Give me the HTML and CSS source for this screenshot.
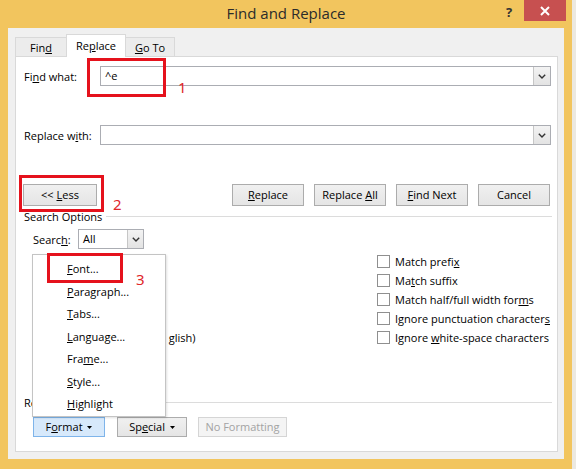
FILE: index.html
```html
<!DOCTYPE html>
<html>
<head>
<meta charset="utf-8">
<title>Find and Replace</title>
<link rel="stylesheet" href="styles.css">
</head>
<body>
<div class="screen">
  <div class="window">
    <div class="titlebar">
      <div class="tb-left"></div>
      <div class="title">Find and Replace</div>
      <div class="tb-right">
        <div class="help">?</div>
        <div class="close">
          <svg width="10" height="10" viewBox="0 0 10 10"><path d="M1 1L9 9M9 1L1 9" stroke="#fff" stroke-width="2" fill="none"/></svg>
        </div>
      </div>
    </div>
    <div class="dialog">
      <div class="tabs">
        <div class="tab tab-find">Fin<u>d</u></div>
        <div class="tab tab-replace active">Re<u>p</u>lace</div>
        <div class="tab tab-goto"><u>G</u>o To</div>
      </div>
      <div class="panel">
        <div class="field-row">
          <div class="field-label">Fi<u>n</u>d what:</div>
          <div class="combo wide">
            <span class="combo-value">^e</span>
            <span class="combo-drop"><svg width="8" height="5" viewBox="0 0 8 5"><path d="M0.8 0.8L4 4L7.2 0.8" stroke="#333" stroke-width="1.4" fill="none"/></svg></span>
          </div>
        </div>
        <div class="field-row replace-row">
          <div class="field-label">Replace w<u>i</u>th:</div>
          <div class="combo wide">
            <span class="combo-value"></span>
            <span class="combo-drop"><svg width="8" height="5" viewBox="0 0 8 5"><path d="M0.8 0.8L4 4L7.2 0.8" stroke="#333" stroke-width="1.4" fill="none"/></svg></span>
          </div>
        </div>
        <div class="button-row">
          <div class="btn btn-less">&lt;&lt; <u>L</u>ess</div>
          <div class="spacer"></div>
          <div class="btn"><u>R</u>eplace</div>
          <div class="btn">Replace <u>A</u>ll</div>
          <div class="btn"><u>F</u>ind Next</div>
          <div class="btn btn-cancel">Cancel</div>
        </div>
        <div class="group-head search-head"><span>Search Options</span><span class="rule"></span></div>
        <div class="search-row">
          <div class="search-label">Searc<u>h</u>:</div>
          <div class="combo small">
            <span class="combo-value">All</span>
            <span class="combo-drop"><svg width="8" height="5" viewBox="0 0 8 5"><path d="M0.8 0.8L4 4L7.2 0.8" stroke="#333" stroke-width="1.4" fill="none"/></svg></span>
          </div>
        </div>
        <div class="options">
          <div class="opt covered"><span class="box"></span><span>Matc<u>h</u> case</span></div>
          <div class="opt covered"><span class="box"></span><span>Find wh<u>o</u>le words only</span></div>
          <div class="opt covered"><span class="box"></span><span>Use wildcards</span></div>
          <div class="opt covered"><span class="box"></span><span>Sounds li<u>k</u>e (English)</span></div>
          <div class="opt"><span class="box covered"></span><span><span class="covered">Find all word forms (En</span>glish)</span></div>
          <div class="opt"><span class="box"></span><span>Match prefi<u>x</u></span></div>
          <div class="opt"><span class="box"></span><span>Ma<u>t</u>ch suffix</span></div>
          <div class="opt"><span class="box"></span><span>Match half/full width for<u>m</u>s</span></div>
          <div class="opt"><span class="box"></span><span>Ignore punctuation character<u>s</u></span></div>
          <div class="opt"><span class="box"></span><span>Ignore <u>w</u>hite-space characters</span></div>
        </div>
        <div class="group-head replace-head"><span>Re<span class="covered">place</span></span><span class="rule"></span></div>
        <div class="format-row">
          <div class="btn btn-format active">F<u>o</u>rmat <svg class="caret" width="5" height="3" viewBox="0 0 5 3"><path d="M0 0H5L2.5 3Z" fill="#000"/></svg></div>
          <div class="btn btn-special">Sp<u>e</u>cial <svg class="caret" width="5" height="3" viewBox="0 0 5 3"><path d="M0 0H5L2.5 3Z" fill="#000"/></svg></div>
          <div class="btn btn-noformat">No Formatting</div>
        </div>

        <div class="menu">
          <div class="menu-item"><u>F</u>ont...</div>
          <div class="menu-item"><u>P</u>aragraph...</div>
          <div class="menu-item"><u>T</u>abs...</div>
          <div class="menu-item"><u>L</u>anguage...</div>
          <div class="menu-item">Fra<u>m</u>e...</div>
          <div class="menu-item"><u>S</u>tyle...</div>
          <div class="menu-item"><u>H</u>ighlight</div>
        </div>

        <div class="mark mark-1"></div>
        <div class="num num-1">1</div>
        <div class="mark mark-2"></div>
        <div class="num num-2">2</div>
        <div class="mark mark-3"></div>
        <div class="num num-3">3</div>
      </div>
    </div>
  </div>
  <div class="outside"></div>
</div>
</body>
</html>
```

FILE: styles.css
```css
* { box-sizing: border-box; }
html, body { margin: 0; padding: 0; }
body {
  width: 576px;
  height: 469px;
  overflow: hidden;
  background: #ece9e1;
  font-family: "Open Sans", "Noto Sans", sans-serif;
  font-size: 11px;
  color: #000;
}
u { text-decoration: underline; text-underline-offset: 1px; }

.screen { display: flex; width: 576px; height: 469px; }
.window {
  width: 572px;
  height: 469px;
  background: #f2c55e;
  display: flex;
  flex-direction: column;
  padding: 0 8px 10px 8px;
}
.outside { flex: 1; background: #ece9e1; }

/* title bar */
.titlebar {
  height: 28px;
  display: grid;
  grid-template-columns: 1fr auto 1fr;
}
.title {
  font-size: 15px;
  line-height: 27px;
  color: #2b2b2b;
}
.tb-right { display: flex; justify-content: flex-end; align-items: flex-start; margin-right: -2px; }
.help {
  width: 14px;
  margin-right: 8px;
  font-size: 13px;
  font-weight: 700;
  line-height: 24px;
  color: #333;
  text-align: center;
}
.close {
  width: 42px;
  height: 21px;
  background: #c75050;
  display: flex;
  align-items: center;
  justify-content: center;
}

/* dialog */
.dialog {
  flex: 1;
  background: #f0f0f0;
  padding: 6px 6px 7px 7px;
  display: flex;
  flex-direction: column;
}
.tabs {
  display: flex;
  align-items: flex-end;
  height: 23px;
  margin-bottom: -1px;
  position: relative;
  z-index: 1;
}
.tab {
  height: 19px;
  margin-bottom: 1px;
  border: 1px solid #d9d9d9;
  border-bottom: none;
  background: #ececec;
  text-align: center;
  line-height: 19px;
}
.tab-find { width: 51px; border-right: none; }
.tab-goto { width: 49px; border-left: none; }
.tab.active {
  width: 60px;
  height: 23px;
  margin-bottom: 0;
  background: #fff;
  line-height: 21px;
}

.panel {
  flex: 1;
  background: #fff;
  border: 1px solid #d9d9d9;
  position: relative;
  padding: 9px 6px 0 8px;
  display: flex;
  flex-direction: column;
}

.field-row { display: flex; align-items: center; height: 20px; }
.replace-row { margin-top: 39px; }
.field-label { width: 76px; }

.combo {
  height: 20px;
  border: 1px solid #abadb3;
  background: #fff;
  display: flex;
  align-items: stretch;
}
.combo.wide { flex: 1; }
.combo.small { width: 66px; }
.combo-value { flex: 1; padding-left: 4px; line-height: 18px; }
.combo-drop {
  width: 17px;
  border-left: 1px solid #c6c6c6;
  background: linear-gradient(#f3f3f3, #e3e3e3);
  display: flex;
  align-items: center;
  justify-content: center;
}
.combo.small .combo-drop { width: 16px; }

.button-row { display: flex; margin-top: 39px; height: 22px; }
.spacer { flex: 1; }
.btn {
  height: 22px;
  width: 72px;
  border: 1px solid #acacac;
  background: linear-gradient(#f0f0f0, #e5e5e5);
  text-align: center;
  line-height: 20px;
  white-space: nowrap;
}
.button-row .btn + .btn { margin-left: 10px; }
.btn-less { width: 74px; margin-left: -1px; }
.btn-cancel { margin-right: 1px; }

.group-head {
  display: flex;
  align-items: center;
  height: 15px;
  line-height: 15px;
}
.group-head .rule { flex: 1; height: 1px; background: #dcdcdc; margin-left: 4px; margin-right: -1px; }
.search-head { margin-top: 3px; }
.replace-head { margin-top: 48px; }

.search-row { display: flex; align-items: center; margin-top: 5px; padding-left: 9px; height: 20px; }
.search-label { width: 45px; }

.options {
  margin-top: 3px;
  padding-left: 9px;
  display: grid;
  grid-template-columns: 344px 1fr;
  grid-template-rows: repeat(5, 19px);
  grid-auto-flow: column;
}
.opt { display: flex; align-items: center; white-space: nowrap; }
.box {
  width: 13px;
  height: 13px;
  border: 1px solid #8f8f8f;
  background: #fff;
  margin-right: 5px;
  flex: none;
}
.covered { visibility: hidden; }

.format-row { display: flex; margin-top: 7px; padding-left: 9px; }
.format-row .btn { height: 20px; line-height: 18px; }
.caret { vertical-align: middle; margin-left: 2px; margin-bottom: 2px; }
.btn-format {
  width: 72px;
  border-color: #7eb4ea;
  background: #d7e9fb;
}
.btn-special { width: 70px; margin-left: 12px; }
.btn-noformat {
  width: 89px;
  margin-left: 11px;
  color: #a3a3a3;
  border-color: #d5d5d5;
  background: #f4f4f4;
}

/* dropdown menu overlay */
.menu {
  position: absolute;
  left: 16px;
  top: 197px;
  width: 134px;
  height: 163px;
  background: #fff;
  border: 1px solid #c4c4c4;
  box-shadow: 1px 1px 2px rgba(0,0,0,0.12);
  padding-top: 3px;
  z-index: 2;
}
.menu-item {
  height: 22.5px;
  line-height: 22.5px;
  padding-left: 34px;
}

/* red annotations */
.mark {
  position: absolute;
  border: 3px solid #e5121c;
  z-index: 3;
}
.mark-1 { left: 71px; top: 1px; width: 79px; height: 39px; }
.mark-2 { left: 3px; top: 118px; width: 85px; height: 37px; }
.mark-3 { left: 31px; top: 196px; width: 76px; height: 30px; }
.num {
  position: absolute;
  z-index: 3;
  color: #e0262b;
  font-family: "Noto Sans", sans-serif;
  font-size: 15px;
  line-height: 18px;
}
.num-1 { left: 162px; top: 21px; }
.num-2 { left: 97px; top: 138px; }
.num-3 { left: 120px; top: 213px; }
```
